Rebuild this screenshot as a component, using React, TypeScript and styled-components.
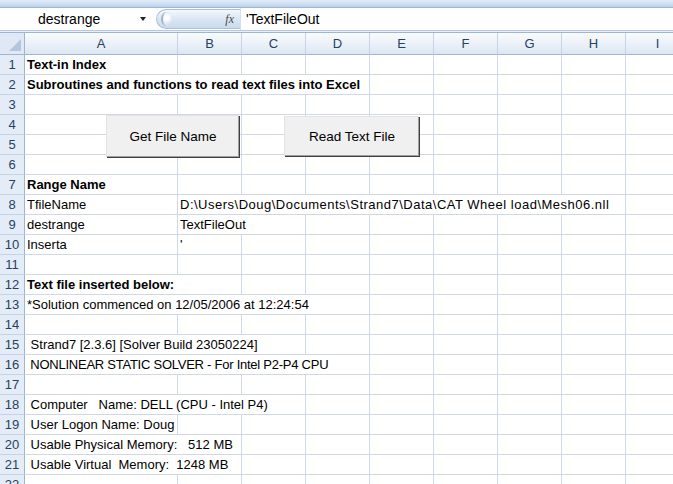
import React from "react";
import styled, { createGlobalStyle } from "styled-components";

const GlobalStyle = createGlobalStyle`
  html, body {
    margin: 0;
    padding: 0;
    background: #ffffff;
  }
  body {
    font-family: "Liberation Sans", Arial, sans-serif;
  }
`;

const Window = styled.div`
  width: 673px;
  height: 484px;
  overflow: hidden;
  background: #ffffff;
  display: flex;
  flex-direction: column;

  & > * {
    flex-shrink: 0;
  }
`;

const RibbonEdge = styled.div`
  height: 7px;
  background: linear-gradient(to bottom, #e3edf8 0%, #c9dbf0 70%, #bcd0ea 100%);
  border-bottom: 1px solid #9fb8d9;
`;

const FormulaBar = styled.div`
  height: 22px;
  display: flex;
  align-items: center;
  background: #ffffff;
`;

const NameBox = styled.div`
  width: 152px;
  height: 100%;
  display: flex;
  align-items: center;
  justify-content: space-between;
  padding: 0 6px 0 38px;
  box-sizing: border-box;
  font-size: 14px;
  color: #000;
`;

const DropArrow = styled.span`
  width: 0;
  height: 0;
  border-left: 3.5px solid transparent;
  border-right: 3.5px solid transparent;
  border-top: 4px solid #222;
`;

const FxPill = styled.div`
  width: 84px;
  height: 20px;
  margin-left: 4px;
  border-radius: 10px 0 0 10px;
  background: linear-gradient(to bottom, #f4f8fd 0%, #dbe6f4 50%, #c9d9ee 100%);
  border: 1px solid #a9bfdc;
  border-right: none;
  display: flex;
  align-items: center;
  justify-content: space-between;
  padding: 0 6px 0 4px;
  box-sizing: border-box;
`;

const Knob = styled.span`
  width: 9px;
  height: 14px;
  border-radius: 50%;
  border-left: 2px solid #9fb3cc;
  background: radial-gradient(circle at 40% 40%, #ffffff 20%, #d7e1ee 70%);
`;

const FxLabel = styled.span`
  font-family: "Liberation Serif", "Times New Roman", serif;
  font-style: italic;
  font-size: 12px;
  color: #4a4a4a;
`;

const FormulaText = styled.div`
  flex: 1;
  height: 100%;
  display: flex;
  align-items: center;
  padding-left: 5px;
  border-left: 1px solid #d5dfec;
  font-size: 14px;
  color: #000;
`;

const Divider = styled.div`
  height: 1px;
  background: #b7c8de;
  border-bottom: 1px solid #e9eff7;
`;

const Sheet = styled.div`
  position: relative;
  display: grid;
  grid-template-columns: 25px 153px repeat(8, 64px);
  grid-template-rows: 22px;
  grid-auto-rows: 20px;
  border-top: 1px solid #9fb6d3;
`;

const Corner = styled.div`
  background: #dfe8f4;
  border-right: 1px solid #9eb6ce;
  border-bottom: 1px solid #9eb6ce;
  box-sizing: border-box;
  position: relative;

  &::after {
    content: "";
    position: absolute;
    right: 3px;
    bottom: 3px;
    width: 0;
    height: 0;
    border-left: 12px solid transparent;
    border-bottom: 12px solid #b4c6dd;
  }
`;

const ColHeader = styled.div`
  background: linear-gradient(to bottom, #f9fbfd 0%, #eaf0f8 55%, #dde6f2 100%);
  border-right: 1px solid #c5d3e4;
  border-bottom: 1px solid #9eb6ce;
  box-sizing: border-box;
  display: flex;
  align-items: center;
  justify-content: center;
  font-size: 13px;
  color: #27415f;
`;

const RowHeader = styled.div`
  background: #e4ecf7;
  border-right: 1px solid #9eb6ce;
  border-bottom: 1px solid #c5d3e4;
  box-sizing: border-box;
  display: flex;
  align-items: flex-end;
  justify-content: center;
  padding-bottom: 2px;
  font-size: 13px;
  color: #27415f;
`;

const Cell = styled.div<{ $span: number; $bold?: boolean; $spacing?: number }>`
  grid-column: span ${(p) => p.$span};
  border-right: 1px solid #d0d7e5;
  border-bottom: 1px solid #d0d7e5;
  box-sizing: border-box;
  display: flex;
  align-items: flex-end;
  padding: 0 0 2px 2px;
  white-space: pre;
  overflow: hidden;
  font-size: 13px;
  font-weight: ${(p) => (p.$bold ? 700 : 400)};
  letter-spacing: ${(p) => p.$spacing ?? 0}px;
  color: #000;
`;

const SheetButton = styled.button<{ $left: number; $top: number; $w: number; $h: number }>`
  position: absolute;
  left: ${(p) => p.$left}px;
  top: ${(p) => p.$top}px;
  width: ${(p) => p.$w}px;
  height: ${(p) => p.$h}px;
  background: #f0f0f0;
  border: none;
  border-top: 1px solid #e3e3e3;
  border-left: 1px solid #e3e3e3;
  box-shadow: inset -1px -1px 0 #a0a0a0, 1px 1px 0 #404040;
  font-family: "Liberation Sans", Arial, sans-serif;
  font-size: 13.5px;
  color: #000;
  padding: 0;
`;

type RowCell = { text: string; span: number; bold?: boolean; spacing?: number };

const COLS = ["A", "B", "C", "D", "E", "F", "G", "H", "I"];
const TOTAL = COLS.length;

const rows: Record<number, RowCell[]> = {
  1: [{ text: "Text-in Index", span: 1, bold: true }],
  2: [{ text: "Subroutines and functions to read text files into Excel", span: 4, bold: true }],
  7: [{ text: "Range Name", span: 1, bold: true }],
  8: [
    { text: "TfileName", span: 1 },
    {
      text: "D:\\Users\\Doug\\Documents\\Strand7\\Data\\CAT Wheel load\\Mesh06.nll",
      span: 7,
      spacing: 0.5,
    },
  ],
  9: [
    { text: "destrange", span: 1 },
    { text: "TextFileOut", span: 2 },
  ],
  10: [
    { text: "Inserta", span: 1 },
    { text: "'", span: 1 },
  ],
  12: [{ text: "Text file inserted below:", span: 2, bold: true }],
  13: [{ text: "*Solution commenced on 12/05/2006 at 12:24:54", span: 4 }],
  15: [{ text: " Strand7 [2.3.6] [Solver Build 23050224]", span: 3 }],
  16: [{ text: " NONLINEAR STATIC SOLVER - For Intel P2-P4 CPU", span: 4, spacing: -0.25 }],
  18: [{ text: " Computer   Name: DELL (CPU - Intel P4)", span: 3 }],
  19: [{ text: " User Logon Name: Doug", span: 1 }],
  20: [{ text: " Usable Physical Memory:   512 MB", span: 2 }],
  21: [{ text: " Usable Virtual  Memory:  1248 MB", span: 2 }],
};

function SheetRow({ n }: { n: number }) {
  const filled = rows[n] || [];
  const used = filled.reduce((s, c) => s + c.span, 0);
  const blanks = Array.from({ length: TOTAL - used });
  return (
    <>
      <RowHeader>{n}</RowHeader>
      {filled.map((c, i) => (
        <Cell key={i} $span={c.span} $bold={c.bold} $spacing={c.spacing}>
          {c.text}
        </Cell>
      ))}
      {blanks.map((_, i) => (
        <Cell key={"b" + i} $span={1} />
      ))}
    </>
  );
}

export default function App() {
  const rowNums = Array.from({ length: 22 }, (_, i) => i + 1);
  return (
    <>
      <GlobalStyle />
      <Window>
        <RibbonEdge />
        <FormulaBar>
          <NameBox>
            <span>destrange</span>
            <DropArrow />
          </NameBox>
          <FxPill>
            <Knob />
            <FxLabel>fx</FxLabel>
          </FxPill>
          <FormulaText>'TextFileOut</FormulaText>
        </FormulaBar>
        <Divider />
        <Sheet>
          <Corner />
          {COLS.map((c) => (
            <ColHeader key={c}>{c}</ColHeader>
          ))}
          {rowNums.map((n) => (
            <SheetRow key={n} n={n} />
          ))}
          <SheetButton $left={106} $top={82} $w={133} $h={42}>
            Get File Name
          </SheetButton>
          <SheetButton $left={284} $top={83} $w={135} $h={40}>
            Read Text File
          </SheetButton>
        </Sheet>
      </Window>
    </>
  );
}
